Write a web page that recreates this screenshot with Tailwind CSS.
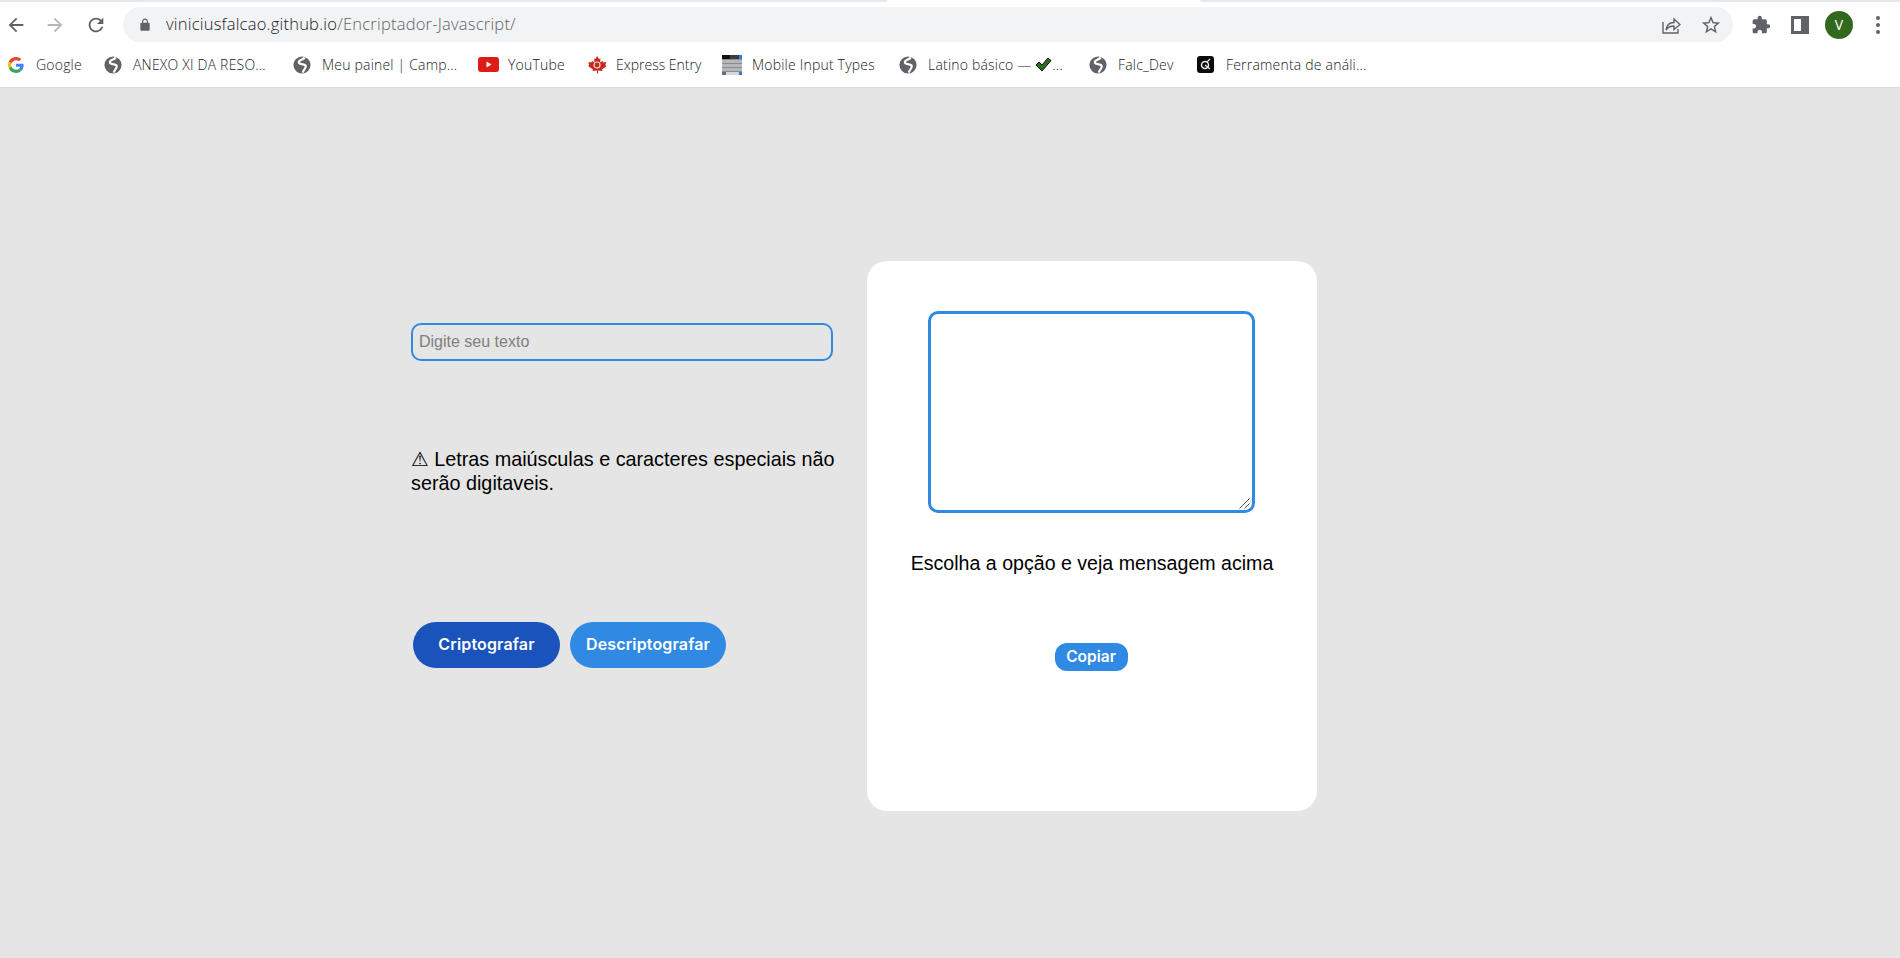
<!DOCTYPE html>
<html lang="pt-BR">
<head>
  <meta charset="UTF-8">
  <title>Encriptador</title>
  <script src="https://cdn.jsdelivr.net/npm/@tailwindcss/browser@4"></script>
</head>
<body class="h-[958px] overflow-hidden bg-[#e5e5e5] font-['Liberation_Sans','DejaVu_Sans',sans-serif]">
  <svg class="hidden">
    <symbol id="globe" viewBox="0 0 20 20">
      <circle cx="10" cy="10" r="9.500" fill="#5f6368"/>
      <path d="M13 1.500C11 5 6.500 3.500 6.500 7c0 3 5.500 1 7.500 3.500 1.500 2.500-2.500 4-3 8" fill="none" stroke="#fff" stroke-width="2.400"/>
    </symbol>
  </svg>

  <!-- browser chrome -->
  <header class="bg-white h-[88px] border-b border-[#dadce0]">
    <div class="flex h-[2px] bg-white">
      <div class="w-[887px] bg-[#e4e7eb] rounded-br-md"></div>
      <div class="w-[313px]"></div>
      <div class="flex-1 bg-[#e4e7eb] rounded-bl-md"></div>
    </div>
    <div class="flex items-center h-[35px] mt-[5px]">
      <div class="flex items-center gap-[7px] w-[123px]">
        <div class="w-[32px] flex justify-center">
          <svg class="w-[22px] h-[22px]" viewBox="0 0 24 24" fill="#5f6368"><path d="M20 11H7.830l5.590-5.590L12 4l-8 8 8 8 1.410-1.410L7.830 13H20v-2z"/></svg>
        </div>
        <div class="w-[32px] flex justify-center">
          <svg class="w-[22px] h-[22px]" viewBox="0 0 24 24" fill="#b4b7bb"><path d="M4 11h12.170l-5.590-5.590L12 4l8 8-8 8-1.410-1.410L16.170 13H4v-2z"/></svg>
        </div>
        <div class="w-[32px] ml-[2px] flex justify-center">
          <svg class="w-[22px] h-[22px]" viewBox="0 0 24 24" fill="#5f6368"><path d="M17.650 6.350C16.200 4.900 14.210 4 12 4c-4.420 0-7.990 3.580-7.990 8s3.570 8 7.990 8c3.730 0 6.840-2.550 7.730-6h-2.080c-.82 2.330-3.040 4-5.650 4-3.310 0-6-2.690-6-6s2.690-6 6-6c1.660 0 3.140.69 4.220 1.780L13 11h7V4l-2.350 2.350z"/></svg>
        </div>
      </div>
      <div class="flex items-center w-[1610px] h-[35px] rounded-full bg-[#f1f3f4] pl-[15px] pr-[11px]">
        <svg class="w-[14px] h-[14px]" viewBox="0 0 24 24" fill="#5f6368"><path d="M18 8h-1V6c0-2.760-2.240-5-5-5S7 3.240 7 6v2H6c-1.100 0-2 .9-2 2v10c0 1.100.9 2 2 2h12c1.100 0 2-.9 2-2V10c0-1.100-.9-2-2-2zM9 6c0-1.660 1.340-3 3-3s3 1.340 3 3v2H9V6z"/></svg>
        <span class="ml-[14px] flex-1 text-[16.500px] tracking-[0.22px] font-light text-[#202124] font-['Open_Sans',sans-serif]">viniciusfalcao.github.io<span class="text-[#5f6368]">/Encriptador-Javascript/</span></span>
        <svg class="w-[20px] h-[20px]" viewBox="0 0 20 20" fill="none" stroke="#5f6368" stroke-width="1.400"><path d="M2 7v11h15v-4"/><path d="M5 15c.5-4 3-7.500 8-7.500V4l6 5.500-6 5V11c-3.500 0-6 1-8 4z"/></svg>
        <svg class="w-[22px] h-[22px] ml-[19px]" viewBox="0 0 24 24" fill="#5f6368"><path d="M22 9.240l-7.190-.62L12 2 9.190 8.630 2 9.240l5.460 4.730L5.820 21 12 17.270 18.180 21l-1.630-7.030L22 9.240zM12 15.400l-3.760 2.270 1-4.280-3.320-2.880 4.380-.38L12 6.100l1.710 4.040 4.380.38-3.320 2.880 1 4.280L12 15.400z"/></svg>
      </div>
      <div class="flex items-center gap-[11px] ml-[14px]">
        <div class="w-[28px] flex justify-center">
          <svg class="w-[20px] h-[20px]" viewBox="0 0 24 24" fill="#5f6368"><path d="M20.500 11H19V7c0-1.100-.9-2-2-2h-4V3.500C13 2.120 11.880 1 10.500 1S8 2.120 8 3.500V5H4c-1.100 0-1.990.9-1.990 2v3.800H3.500c1.490 0 2.700 1.210 2.700 2.700s-1.210 2.700-2.700 2.700H2V20c0 1.100.9 2 2 2h3.800v-1.500c0-1.490 1.210-2.700 2.700-2.700 1.490 0 2.700 1.210 2.700 2.700V22H17c1.100 0 2-.9 2-2v-4h1.500c1.380 0 2.500-1.120 2.500-2.500S21.880 11 20.500 11z"/></svg>
        </div>
        <div class="w-[28px] flex justify-center">
          <div class="w-[18px] h-[18px] border-[3px] border-r-[8px] border-[#5f6368]"></div>
        </div>
        <div class="w-[28px] h-[28px] rounded-full bg-[#33691e] text-white text-[14px] flex items-center justify-center font-['Open_Sans',sans-serif]">V</div>
        <div class="w-[28px] flex flex-col items-center gap-[3px]">
          <div class="w-[4px] h-[4px] rounded-full bg-[#5f6368]"></div>
          <div class="w-[4px] h-[4px] rounded-full bg-[#5f6368]"></div>
          <div class="w-[4px] h-[4px] rounded-full bg-[#5f6368]"></div>
        </div>
      </div>
    </div>
    <!-- bookmarks -->
    <div class="flex items-center h-[45px] pl-[8px] text-[14px] tracking-[0.2px] font-light text-[#202124] font-['Open_Sans',sans-serif] whitespace-nowrap">
      <div class="flex items-center gap-[12px] w-[96px]">
        <svg class="w-[16px] h-[16px]" viewBox="0 0 48 48"><path fill="#EA4335" d="M24 9.500c3.500 0 6.700 1.300 9.100 3.500l6.800-6.800C35.800 2.400 30.300 0 24 0 14.600 0 6.500 5.400 2.600 13.200l7.900 6.200C12.400 13.700 17.700 9.500 24 9.500z"/><path fill="#4285F4" d="M46.900 24.500c0-1.600-.1-3.100-.4-4.500H24v9h12.900c-.6 3-2.200 5.500-4.800 7.200l7.700 6c4.500-4.200 7.100-10.300 7.100-17.700z"/><path fill="#FBBC05" d="M10.500 28.600c-.5-1.400-.8-3-.8-4.600s.3-3.200.8-4.600l-7.900-6.200C.9 16.500 0 20.100 0 24s.9 7.500 2.600 10.800l7.900-6.200z"/><path fill="#34A853" d="M24 48c6.500 0 11.900-2.100 15.900-5.800l-7.700-6c-2.200 1.500-4.900 2.300-8.200 2.300-6.300 0-11.600-4.200-13.500-9.900l-7.900 6.200C6.500 42.600 14.600 48 24 48z"/></svg>
        <span>Google</span>
      </div>
      <div class="flex items-center gap-[11px] w-[189px]">
        <svg class="w-[18px] h-[18px]"><use href="#globe"/></svg>
        <span>ANEXO XI DA RESO...</span>
      </div>
      <div class="flex items-center gap-[11px] w-[185px]">
        <svg class="w-[18px] h-[18px]"><use href="#globe"/></svg>
        <span>Meu painel | Camp...</span>
      </div>
      <div class="flex items-center gap-[9px] w-[109px]">
        <svg class="w-[21px] h-[15px]" viewBox="0 0 21 15"><rect width="21" height="15" rx="3" fill="#dc1c15"/><path d="M8.500 4.500l5 3-5 3z" fill="#fff"/></svg>
        <span>YouTube</span>
      </div>
      <div class="flex items-center gap-[9px] w-[135px]">
        <svg class="w-[20px] h-[20px]" viewBox="0 0 20 20"><path d="M10 1l2 3 1.500-.5-.5 4 2.500-1.500.7 1.500 3-.5-.9 3 1.200 1-4.500 3.500.5 1.500-4.500-.5v3h-1v-3l-4.500.5.500-1.500L1 11l1.200-1-.9-3 3 .5.700-1.500L7.500 7.500l-.5-4L8.500 4z" fill="#c8281e"/><circle cx="10" cy="10" r="3" fill="none" stroke="#e8dcdc" stroke-width="1.200"/></svg>
        <span class="tracking-[0px]">Express Entry</span>
      </div>
      <div class="flex items-center gap-[10px] w-[177px]">
        <div class="w-[20px] h-[20px] flex flex-col gap-px bg-[#8a8d90]">
          <div class="h-[4px] flex justify-between bg-[#3a3c3e]"><div class="w-[8px] bg-[#111]"></div><div class="w-[3px] bg-[#2a7de1]"></div></div>
          <div class="h-[3px] bg-[#b5b8bb]"></div>
          <div class="h-[3px] bg-[#b5b8bb]"></div>
          <div class="h-[3px] bg-[#b5b8bb]"></div>
          <div class="h-[3px] flex justify-between bg-[#d5d7d9]"><div class="w-[4px] bg-[#6a6d70]"></div><div class="w-[3px] bg-[#2a7de1]"></div></div>
        </div>
        <span>Mobile Input Types</span>
      </div>
      <div class="flex items-center gap-[11px] w-[190px]">
        <svg class="w-[18px] h-[18px]"><use href="#globe"/></svg>
        <span class="flex items-center">Latino básico —&nbsp;<svg class="w-[17px] h-[15px]" viewBox="0 0 17 15"><path d="M1 8l3-3 3 3 6-7 3 2.500L7 14z" fill="#2f6b1f" stroke="#111" stroke-width="1"/></svg>...</span>
      </div>
      <div class="flex items-center gap-[11px] w-[108px]">
        <svg class="w-[18px] h-[18px]"><use href="#globe"/></svg>
        <span>Falc_Dev</span>
      </div>
      <div class="flex items-center gap-[12px]">
        <svg class="w-[17px] h-[17px]" viewBox="0 0 17 17"><rect width="17" height="17" rx="3" fill="#0b0b0f"/><circle cx="8" cy="9" r="3.500" fill="none" stroke="#e8e8e8" stroke-width="1.500"/><path d="M8 9l5 4M10 6l3-3" stroke="#e8e8e8" stroke-width="1.200"/></svg>
        <span>Ferramenta de análi...</span>
      </div>
    </div>
  </header>

  <main class="flex pl-[411px] pt-[173px]">
    <section class="w-[456px] pt-[62px]">
      <input type="text" placeholder="Digite seu texto" class="block w-[422px] h-[38px] px-[6px] border-2 border-[#308ae3] rounded-[10px] bg-transparent text-[16px] placeholder:text-[#808080] outline-none">
      <p class="w-[430px] mt-[86px] text-[19.800px] leading-[24px] text-black">⚠ Letras maiúsculas e caracteres especiais não serão digitaveis.</p>
      <div class="flex gap-[10px] ml-[2px] mt-[127px] font-['Inter',sans-serif] font-semibold text-[16px] tracking-[0.15px] text-white">
        <button class="w-[147px] h-[46px] pb-[2px] rounded-full bg-[#1a53bb]">Criptografar</button>
        <button class="w-[156px] h-[46px] pb-[2px] rounded-full bg-[#308ae3]">Descriptografar</button>
      </div>
    </section>
    <section class="w-[450px] h-[550px] rounded-[20px] bg-white flex flex-col items-center">
      <div class="relative w-[327px] h-[202px] mt-[50px] mr-[2px]">
        <textarea class="block w-full h-full border-[3px] border-[#308ae3] rounded-[10px] outline-none resize-none"></textarea>
        <svg class="absolute right-[5px] bottom-[4px] w-[11px] h-[11px] pointer-events-none" viewBox="0 0 11 11" fill="none" stroke="#555" stroke-width="1"><path d="M.5 10.500L10.500.5M5.500 10.500l5-5"/></svg>
      </div>
      <p class="mt-[38px] text-[19.600px] leading-[24px] text-black">Escolha a opção e veja mensagem acima</p>
      <button class="w-[73px] h-[28px] mt-[68px] mr-[2px] pb-px rounded-[12px] bg-[#308ae3] text-white font-['Inter',sans-serif] font-semibold text-[15.500px]">Copiar</button>
    </section>
  </main>
</body>
</html>
